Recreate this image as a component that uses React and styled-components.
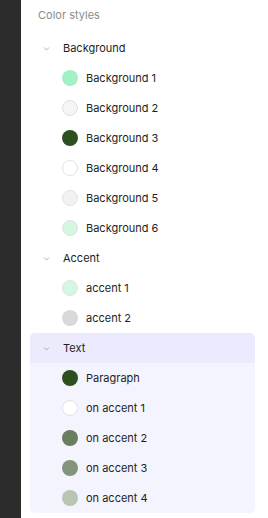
import React from "react";
import styled, { createGlobalStyle } from "styled-components";

const GlobalStyle = createGlobalStyle`
  html, body {
    margin: 0;
    padding: 0;
    background: #ffffff;
  }
  body {
    font-family: Inter, "Noto Sans", sans-serif;
    -webkit-font-smoothing: antialiased;
  }
`;

const Page = styled.div`
  display: flex;
  width: 268px;
  height: 518px;
  overflow: hidden;
`;

const Rail = styled.div`
  width: 21px;
  flex-shrink: 0;
  background: #2c2c2c;
`;

const Panel = styled.div`
  flex: 1;
  display: flex;
  flex-direction: column;
  padding: 0 13px 0 9px;
`;

const Title = styled.div`
  height: 33px;
  display: flex;
  align-items: center;
  padding-left: 8px;
  padding-bottom: 3px;
  box-sizing: border-box;
  font-size: 11px;
  color: #8c8c8c;
`;

const Group = styled.div`
  display: flex;
  flex-direction: column;
  border-radius: 5px;
  overflow: hidden;
  background: ${(p) => (p.selected ? "#f4f4ff" : "transparent")};
`;

const GroupHeader = styled.div`
  height: 30px;
  display: flex;
  align-items: center;
  padding-left: 13px;
  gap: 13px;
  font-size: 11px;
  color: #1e1e1e;
  background: ${(p) => (p.selected ? "#ebebfd" : "transparent")};
`;

const Chevron = styled.svg`
  width: 7px;
  height: 7px;
  flex-shrink: 0;
`;

const Item = styled.div`
  height: 30px;
  display: flex;
  align-items: center;
  padding-left: 32px;
  gap: 8px;
  font-size: 11px;
  color: #1e1e1e;
`;

const Swatch = styled.span`
  width: 16px;
  height: 16px;
  border-radius: 50%;
  box-sizing: border-box;
  flex-shrink: 0;
  background: ${(p) => p.color};
  border: ${(p) => (p.outlined ? "1px solid #e2e2e2" : "none")};
`;

const groups = [
  {
    name: "Background",
    items: [
      { name: "Background 1", color: "#a3f0c4" },
      { name: "Background 2", color: "#f5f5f5", outlined: true },
      { name: "Background 3", color: "#2d5020" },
      { name: "Background 4", color: "#ffffff", outlined: true },
      { name: "Background 5", color: "#f1f3f1", outlined: true },
      { name: "Background 6", color: "#d4f7e0", outlined: true },
    ],
  },
  {
    name: "Accent",
    items: [
      { name: "accent 1", color: "#d4f7e0", outlined: true },
      { name: "accent 2", color: "#d9d9d9" },
    ],
  },
  {
    name: "Text",
    selected: true,
    items: [
      { name: "Paragraph", color: "#2d5020" },
      { name: "on accent 1", color: "#ffffff", outlined: true },
      { name: "on accent 2", color: "#6a7d60" },
      { name: "on accent 3", color: "#82947c" },
      { name: "on accent 4", color: "#b8c5b3" },
    ],
  },
];

function ChevronDown() {
  return (
    <Chevron viewBox="0 0 7 7">
      <path d="M1 2.5 L3.5 5 L6 2.5" fill="none" stroke="#b0b0b0" strokeWidth="1" />
    </Chevron>
  );
}

export default function App() {
  return (
    <>
      <GlobalStyle />
      <Page>
        <Rail />
        <Panel>
          <Title>Color styles</Title>
          {groups.map((g) => (
            <Group key={g.name} selected={g.selected}>
              <GroupHeader selected={g.selected}>
                <ChevronDown />
                {g.name}
              </GroupHeader>
              {g.items.map((it) => (
                <Item key={it.name}>
                  <Swatch color={it.color} outlined={it.outlined} />
                  {it.name}
                </Item>
              ))}
            </Group>
          ))}
        </Panel>
      </Page>
    </>
  );
}
